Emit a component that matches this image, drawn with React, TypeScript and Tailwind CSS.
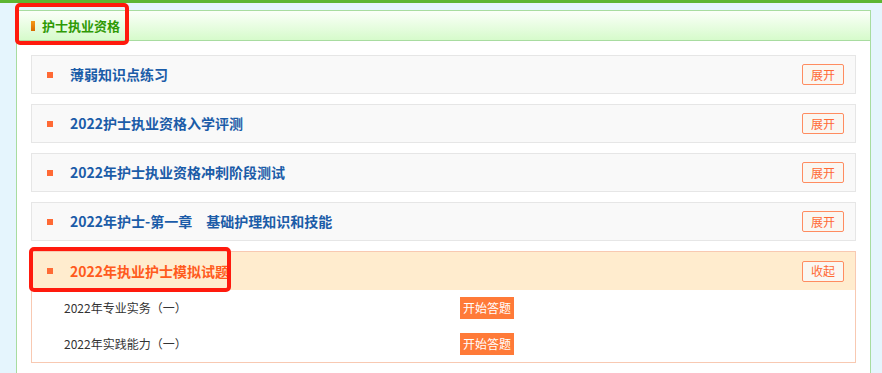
import React from "react";

interface Section {
  title: string;
  open?: boolean;
  items?: string[];
}

const sections: Section[] = [
  { title: "薄弱知识点练习" },
  { title: "2022护士执业资格入学评测" },
  { title: "2022年护士执业资格冲刺阶段测试" },
  { title: "2022年护士-第一章\u3000基础护理知识和技能" },
  {
    title: "2022年执业护士模拟试题",
    open: true,
    items: ["2022年专业实务（一）", "2022年实践能力（一）"],
  },
  // only the top edge of the next row shows in the window
  { title: "" },
];

const font = { fontFamily: '"Microsoft YaHei", "Noto Sans CJK SC", "Noto Sans", sans-serif' };

function Row({ s }: { s: Section }) {
  if (s.open) {
    return (
      <div className="border border-[#f8c9b2] relative">
        <div className="h-[38px] bg-[#ffecce] flex items-center pl-[15px] pr-[11px]">
          <span className="w-[6px] h-[6px] bg-[#ff6a35]" />
          <span className="ml-[17px] text-[14px] font-bold text-[#ff5a1c] flex-1">{s.title}</span>
          <span className="w-[42px] h-[21px] border border-[#ff8c60] bg-[#faf7f2] text-[#ff6a35] text-[12px] flex items-center justify-center rounded-[2px]">
            收起
          </span>
        </div>
        <div className="bg-white">
          {s.items!.map((it) => (
            <div key={it} className="h-[36px] grid grid-cols-[396px_1fr] items-center pl-[32px]">
              <span className="text-[12px] text-[#333]">{it}</span>
              <span className="w-[54px] h-[22px] bg-[#ff7a38] text-white text-[12px] flex items-center justify-center">
                开始答题
              </span>
            </div>
          ))}
        </div>
        <div className="absolute left-[-3px] top-[-5px] w-[202px] h-[45px] border-[4px] border-[#ff1a0d] rounded-[5px]" />
      </div>
    );
  }
  if (!s.title) {
    return <div className="h-[39px] border border-[#e6e6e6] bg-[#f9f9f9]" />;
  }
  return (
    <div className="h-[39px] border border-[#e6e6e6] bg-[#f9f9f9] flex items-center pl-[15px] pr-[11px]">
      <span className="w-[6px] h-[6px] bg-[#ff6a35]" />
      <span className="ml-[17px] text-[14px] font-bold text-[#1b5ca8] flex-1">{s.title}</span>
      <span className="w-[42px] h-[21px] border border-[#ff8c60] bg-[#faf7f2] text-[#ff6a35] text-[12px] flex items-center justify-center rounded-[2px]">
        展开
      </span>
    </div>
  );
}

export default function App() {
  return (
    <div className="w-[882px] h-[373px] overflow-hidden bg-[#e5f5fd]" style={font}>
      <div className="h-[3px] bg-[#5db632]" />
      <div className="ml-[16px] mt-[7px] w-[855px] border border-[#a8dca0] bg-white relative">
        <div className="h-[30px] border-b border-[#a8dca0] bg-gradient-to-b from-[#fbfff9] to-[#d6fbcb] flex items-center pl-[14px]">
          <span className="w-[4px] h-[10px] bg-gradient-to-b from-[#f59a1a] to-[#d86a00]" />
          <span className="ml-[7px] text-[13px] font-bold text-[#2f9a05]">护士执业资格</span>
        </div>
        <div className="absolute left-[-2px] top-[-8px] w-[114px] h-[42px] border-[4px] border-[#ff1a0d] rounded-[5px]" />
        <div className="px-[14px] pt-[14px] flex flex-col gap-[10px]">
          {sections.map((s, i) => (
            <Row key={i} s={s} />
          ))}
        </div>
      </div>
    </div>
  );
}
